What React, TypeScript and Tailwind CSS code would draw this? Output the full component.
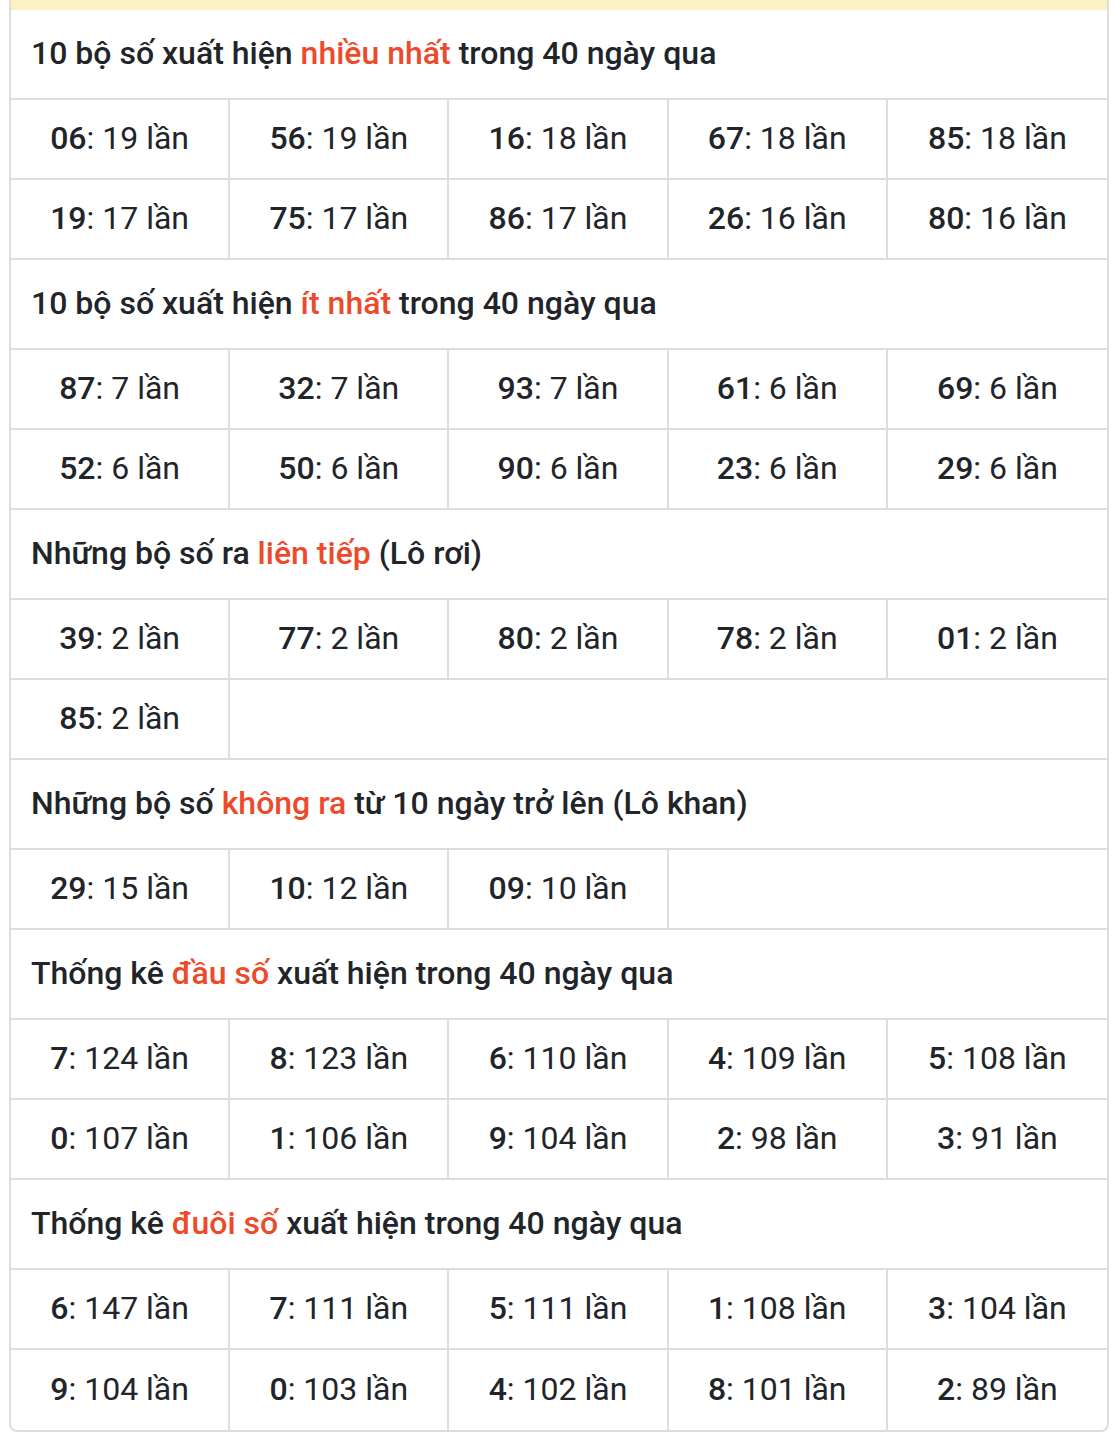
import React from "react";

type Item = [string, string];
type Section = { pre: string; red: string; post: string; items: Item[] };

const sections: Section[] = [
  {
    pre: "10 bộ số xuất hiện ",
    red: "nhiều nhất",
    post: " trong 40 ngày qua",
    items: [
      ["06", "19"], ["56", "19"], ["16", "18"], ["67", "18"], ["85", "18"],
      ["19", "17"], ["75", "17"], ["86", "17"], ["26", "16"], ["80", "16"],
    ],
  },
  {
    pre: "10 bộ số xuất hiện ",
    red: "ít nhất",
    post: " trong 40 ngày qua",
    items: [
      ["87", "7"], ["32", "7"], ["93", "7"], ["61", "6"], ["69", "6"],
      ["52", "6"], ["50", "6"], ["90", "6"], ["23", "6"], ["29", "6"],
    ],
  },
  {
    pre: "Những bộ số ra ",
    red: "liên tiếp",
    post: " (Lô rơi)",
    items: [["39", "2"], ["77", "2"], ["80", "2"], ["78", "2"], ["01", "2"], ["85", "2"]],
  },
  {
    pre: "Những bộ số ",
    red: "không ra",
    post: " từ 10 ngày trở lên (Lô khan)",
    items: [["29", "15"], ["10", "12"], ["09", "10"]],
  },
  {
    pre: "Thống kê ",
    red: "đầu số",
    post: " xuất hiện trong 40 ngày qua",
    items: [
      ["7", "124"], ["8", "123"], ["6", "110"], ["4", "109"], ["5", "108"],
      ["0", "107"], ["1", "106"], ["9", "104"], ["2", "98"], ["3", "91"],
    ],
  },
  {
    pre: "Thống kê ",
    red: "đuôi số",
    post: " xuất hiện trong 40 ngày qua",
    items: [
      ["6", "147"], ["7", "111"], ["5", "111"], ["1", "108"], ["3", "104"],
      ["9", "104"], ["0", "103"], ["4", "102"], ["8", "101"], ["2", "89"],
    ],
  },
];

function chunk(items: Item[]): Item[][] {
  const rows: Item[][] = [];
  for (let i = 0; i < items.length; i += 5) rows.push(items.slice(i, i + 5));
  return rows;
}

const fillerSpan: Record<number, string> = {
  1: "col-span-4",
  2: "col-span-3",
  3: "col-span-2",
  4: "col-span-1",
};

export default function App() {
  return (
    <div
      className="w-[1118px] min-h-[1438px] bg-white text-[#212529]"
      style={{ fontFamily: "Roboto, 'Noto Sans', sans-serif" }}
    >
      <div className="ml-[9px] w-[1100px] border-x-2 border-b-2 border-[#dddddd] rounded-b-[8px] overflow-hidden">
        <div className="h-[10px] bg-[#fdf0c2]" />
        {sections.map((s, si) => {
          const rows = chunk(s.items);
          return (
            <div key={si}>
              <div className="h-[90px] border-b-2 border-[#dddddd] flex items-center pl-[20px] pb-[2px] text-[32px] font-medium leading-none">
                <span className="whitespace-pre">
                  {s.pre}
                  <span className="text-[#ec4a2a]">{s.red}</span>
                  {s.post}
                </span>
              </div>
              {rows.map((r, ri) => {
                const isLast = si === sections.length - 1 && ri === rows.length - 1;
                return (
                  <div
                    key={ri}
                    className={
                      "grid grid-cols-5 h-[80px] " +
                      (isLast ? "" : "border-b-2 border-[#dddddd]")
                    }
                  >
                    {r.map((it, ci) => (
                      <div
                        key={ci}
                        className={
                          "flex items-center justify-center pb-[2px] text-[32px] leading-none " +
                          (ci < 4 ? "border-r-2 border-[#dddddd]" : "")
                        }
                      >
                        <span className="whitespace-pre">
                          <span className="font-medium">{it[0]}</span>: {it[1]} lần
                        </span>
                      </div>
                    ))}
                    {r.length < 5 && <div className={fillerSpan[r.length]} />}
                  </div>
                );
              })}
            </div>
          );
        })}
      </div>
    </div>
  );
}
